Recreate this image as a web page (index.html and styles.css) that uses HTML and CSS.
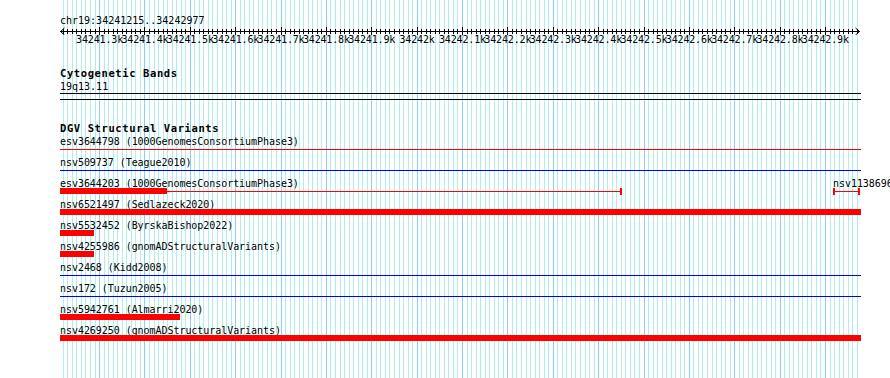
FILE: index.html
```html
<!DOCTYPE html>
<html lang="en">

<head>
    <meta charset="UTF-8">
    <meta name="viewport" content="width=device-width, initial-scale=1.0">
    <title>chr19:34241215..34242977</title>
    <link rel="stylesheet" href="styles.css">
</head>

<body>
    <div class="view">
        <div class="loc">chr19:34241215..34242977</div>

        <div class="ruler">
            <svg class="arrow arrow-left" width="5" height="9" viewBox="0 0 5 9">
                <path d="M4.5 2 L0.5 5.5 L4.5 9" fill="none" stroke="#000" stroke-width="1" />
            </svg>
            <svg class="arrow arrow-right" width="5" height="9" viewBox="0 0 5 9">
                <path d="M0.5 2 L4.5 5.5 L0.5 9" fill="none" stroke="#000" stroke-width="1" />
            </svg>
        </div>

        <div class="scale">
            <span>34241.3k</span>
            <span>34241.4k</span>
            <span>34241.5k</span>
            <span>34241.6k</span>
            <span>34241.7k</span>
            <span>34241.8k</span>
            <span>34241.9k</span>
            <span>34242k</span>
            <span>34242.1k</span>
            <span>34242.2k</span>
            <span>34242.3k</span>
            <span>34242.4k</span>
            <span>34242.5k</span>
            <span>34242.6k</span>
            <span>34242.7k</span>
            <span>34242.8k</span>
            <span>34242.9k</span>
        </div>

        <!-- 染色体带 -->
        <div class="track bands">
            <h2 class="track-title">Cytogenetic Bands</h2>
            <div class="band-label">19q13.11</div>
        </div>

        <div class="divider"></div>

        <!-- DGV 结构变异 -->
        <div class="track variants">
            <h2 class="track-title">DGV Structural Variants</h2>

            <div class="row">
                <div class="label">esv3644798 (1000GenomesConsortiumPhase3)</div>
                <div class="glyph"><div class="thin fill"></div></div>
            </div>

            <div class="row">
                <div class="label">nsv509737 (Teague2010)</div>
                <div class="glyph"><div class="thin blue fill"></div></div>
            </div>

            <div class="row">
                <div class="label">esv3644203 (1000GenomesConsortiumPhase3)</div>
                <div class="glyph">
                    <div class="thick" style="width: 107px;"></div>
                    <div class="thin" style="width: 453px;"></div>
                    <div class="cap"></div>
                </div>
                <div class="feature" style="left: 773px;">
                    <div class="label">nsv1138696</div>
                    <div class="glyph">
                        <div class="cap"></div>
                        <div class="thin" style="width: 23px;"></div>
                        <div class="cap"></div>
                    </div>
                </div>
            </div>

            <div class="row">
                <div class="label">nsv6521497 (Sedlazeck2020)</div>
                <div class="glyph"><div class="thick fill"></div></div>
            </div>

            <div class="row">
                <div class="label">nsv5532452 (ByrskaBishop2022)</div>
                <div class="glyph"><div class="thick" style="width: 34px;"></div></div>
            </div>

            <div class="row">
                <div class="label">nsv4255986 (gnomADStructuralVariants)</div>
                <div class="glyph"><div class="thick" style="width: 34px;"></div></div>
            </div>

            <div class="row">
                <div class="label">nsv2468 (Kidd2008)</div>
                <div class="glyph"><div class="thin blue fill"></div></div>
            </div>

            <div class="row">
                <div class="label">nsv172 (Tuzun2005)</div>
                <div class="glyph"><div class="thin blue fill"></div></div>
            </div>

            <div class="row">
                <div class="label">nsv5942761 (Almarri2020)</div>
                <div class="glyph"><div class="thick" style="width: 120px;"></div></div>
            </div>

            <div class="row">
                <div class="label">nsv4269250 (gnomADStructuralVariants)</div>
                <div class="glyph"><div class="thick fill"></div></div>
            </div>
        </div>
    </div>
</body>

</html>
```

FILE: styles.css
```css
body {
    margin: 0;
    overflow: hidden;
    background: #fff;
    color: #000;
    font-family: "DejaVu Sans Mono", monospace;
}

/* 视图区域，背景为网格线 */
.view {
    box-sizing: border-box;
    margin-left: 60px;
    width: 801px;
    height: 378px;
    padding-top: 16px;
    background-image:
        repeating-linear-gradient(to right, #87cefa 39.1px, #87cefa 40.1px, transparent 40.1px, transparent 84.47px),
        repeating-linear-gradient(to right, #afeeee 2.77px, #afeeee 3.77px, transparent 3.77px, transparent 7.307px);
}

.loc {
    font-size: 10px;
    line-height: 10px;
    height: 10px;
    white-space: nowrap;
}

/* 标尺 */
.ruler {
    position: relative;
    width: 800px;
    height: 9px;
    background-image:
        linear-gradient(#000, #000),
        repeating-linear-gradient(to right, #000 39.1px, #000 40.1px, transparent 40.1px, transparent 84.47px),
        repeating-linear-gradient(to right, #000 2.77px, #000 3.77px, transparent 3.77px, transparent 7.307px);
    background-size: 100% 1px, 100% 8px, 100% 5px;
    background-position: 0 5px, 0 1px, 0 3px;
    background-repeat: no-repeat;
}

.arrow {
    position: absolute;
    top: 0;
}

.arrow-left {
    left: 0;
}

.arrow-right {
    right: 0;
}

.scale {
    display: flex;
    padding-left: 16.9px;
    height: 10px;
    font-size: 10px;
    letter-spacing: -0.15px;
    line-height: 10px;
}

.scale span {
    flex: 0 0 45.37px;
    min-width: 0;
    display: flex;
    justify-content: center;
    white-space: nowrap;
}

/* 轨道 */
.track-title {
    margin: 0;
    font-size: 10.5px;
    letter-spacing: 0.6px;
    font-weight: bold;
    line-height: 10px;
    height: 10px;
    white-space: nowrap;
}

.bands {
    margin-top: 23px;
}

.band-label {
    margin-top: 4px;
    font-size: 10px;
    line-height: 10px;
    height: 10px;
}

.divider {
    margin-top: 1px;
    height: 5px;
    border-top: 1px solid #000;
    border-bottom: 1px solid #000;
}

.variants {
    margin-top: 23px;
}

.variants .track-title {
    margin-bottom: 2px;
}

.row {
    position: relative;
    height: 21px;
}

.label {
    padding-top: 2px;
    font-size: 10px;
    letter-spacing: -0.05px;
    line-height: 10px;
    height: 10px;
    white-space: nowrap;
}

.glyph {
    display: flex;
    height: 6px;
    margin-top: -1px;
}

.thick {
    height: 6px;
    background: #f00;
}

.thin {
    height: 1px;
    margin-top: 3px;
    background: #f00;
}

.thin.blue {
    background: #00f;
}

.fill {
    flex: 1;
}

.cap {
    width: 2px;
    height: 7px;
    background: #f00;
}

.feature {
    position: absolute;
    top: 0;
}
```
